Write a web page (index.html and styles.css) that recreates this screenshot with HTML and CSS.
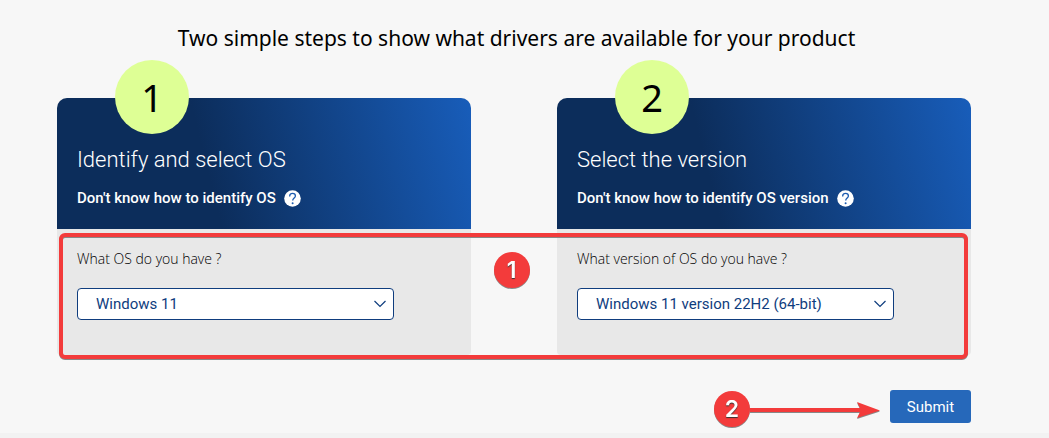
FILE: index.html
```
<!DOCTYPE html>
<html lang="en">
<head>
<meta charset="utf-8">
<meta name="viewport" content="width=device-width, initial-scale=1">
<title>Select your operating system</title>
<link rel="stylesheet" href="styles.css">
</head>
<body>
<main class="page">
  <h1 class="title">Two simple steps to show what drivers are available for your product</h1>
  <form class="form">
    <div class="cards">
      <section class="card">
        <header class="card-head">
          <span class="step">1</span>
          <h2 class="card-title">Identify and select OS</h2>
          <p class="hint">Don't know how to identify OS
            <button class="help" type="button" aria-label="Help">
              <svg class="help-icon" viewBox="0 0 17 17" aria-hidden="true"><circle cx="8.500" cy="8.500" r="8.300" fill="#fff"/><path d="M5.700 6.500V6C5.700 4.300 6.900 3.400 8.500 3.400S11.400 4.300 11.400 5.900C11.400 8 8.700 8 8.700 10.600" fill="none" stroke="#1d5cb0" stroke-width="1.300"/><circle cx="8.600" cy="13.200" r="1" fill="#1d5cb0"/></svg>
            </button>
          </p>
        </header>
        <div class="card-body">
          <label class="label" for="os">What OS do you have ?</label>
          <div class="field">
            <select class="select" id="os"><option>Windows 11</option></select>
            <svg class="chevron" viewBox="0 0 12 8" aria-hidden="true"><path d="M.500 1 6 6.500 11.500 1" fill="none" stroke="#0f3d7e" stroke-width="1.200"/></svg>
          </div>
        </div>
      </section>
      <section class="card">
        <header class="card-head">
          <span class="step">2</span>
          <h2 class="card-title">Select the version</h2>
          <p class="hint">Don't know how to identify OS version
            <button class="help" type="button" aria-label="Help">
              <svg class="help-icon" viewBox="0 0 17 17" aria-hidden="true"><circle cx="8.500" cy="8.500" r="8.300" fill="#fff"/><path d="M5.700 6.500V6C5.700 4.300 6.900 3.400 8.500 3.400S11.400 4.300 11.400 5.900C11.400 8 8.700 8 8.700 10.600" fill="none" stroke="#1d5cb0" stroke-width="1.300"/><circle cx="8.600" cy="13.200" r="1" fill="#1d5cb0"/></svg>
            </button>
          </p>
        </header>
        <div class="card-body">
          <label class="label" for="version">What version of OS do you have ?</label>
          <div class="field">
            <select class="select" id="version"><option>Windows 11 version 22H2 (64-bit)</option></select>
            <svg class="chevron" viewBox="0 0 12 8" aria-hidden="true"><path d="M.500 1 6 6.500 11.500 1" fill="none" stroke="#0f3d7e" stroke-width="1.200"/></svg>
          </div>
        </div>
      </section>
      <div class="outline"><span class="marker">1</span></div>
    </div>
    <div class="actions">
      <div class="pointer">
        <span class="marker">2</span>
        <svg class="arrow" viewBox="0 0 130 20" aria-hidden="true"><path d="M0 9H110L107 3 130 11.500 107 19 110 13H0Z" fill="#f33b3b"/></svg>
      </div>
      <button class="submit" type="submit">Submit</button>
    </div>
  </form>
</main>
<footer class="footer"></footer>
</body>
</html>
```
FILE: styles.css
```
* { box-sizing: border-box; }
body {
  margin: 0;
  min-height: 100vh;
  display: flex;
  flex-direction: column;
  background: #f7f7f7;
  color: #000;
  font-family: Roboto, "Noto Sans", sans-serif;
  font-size: 15px;
  line-height: 20px;
}
.page { padding: 22px 78px 6px 57px; }
.title {
  margin: 0;
  padding-left: 5px;
  text-align: center;
  font: 400 21px/32px "Noto Sans", sans-serif;
}
.form { margin-top: 44px; }
.cards {
  position: relative;
  display: grid;
  grid-template-columns: 1fr 1fr;
  gap: 86px;
}
.card {
  border-radius: 10px 10px 4px 4px;
  background: #e8e8e8;
}
.card-head {
  position: relative;
  padding: 46px 20px 21px;
  border-radius: 10px 10px 0 0;
  background: linear-gradient(76deg, #0c2d5b 37%, #185dba 100%);
  color: #fff;
}
.step {
  position: absolute;
  top: -38px;
  left: 58px;
  width: 74px;
  height: 74px;
  border-radius: 50%;
  background: #deff95;
  color: #000;
  text-align: center;
  font: 400 38px/74px "Noto Sans", sans-serif;
}
.card-title {
  margin: 0;
  font-size: 22px;
  font-weight: 300;
  line-height: 32px;
}
.hint {
  display: flex;
  align-items: center;
  gap: 8px;
  margin: 12px 0 0;
  font-weight: 500;
}
.help {
  display: flex;
  padding: 0;
  border: 0;
  background: none;
}
.help-icon { width: 17px; height: 17px; }
.card-body { padding: 20px 20px 35px; }
.label {
  display: block;
  font: 300 14px/20px "Open Sans", sans-serif;
}
.field {
  position: relative;
  max-width: 317px;
  margin-top: 19px;
}
.select {
  display: block;
  width: 100%;
  height: 32px;
  padding: 0 36px 0 18px;
  appearance: none;
  border: 1px solid #0f3d7e;
  border-radius: 4px;
  background: #fff;
  color: #0f3d7e;
  font: inherit;
}
.chevron {
  position: absolute;
  top: 12px;
  right: 8px;
  width: 12px;
  height: 8px;
  pointer-events: none;
}
.outline {
  position: absolute;
  inset: 135px 3px -4px 2px;
  border: 4px solid #f33b3b;
  border-radius: 6px;
  filter: drop-shadow(0 1px 0 #888);
  pointer-events: none;
}
.marker {
  width: 36px;
  height: 36px;
  border-radius: 50%;
  background: #f33b3b;
  color: #fff;
  text-align: center;
  text-shadow: 0 1px 1px #333;
  font: 600 23px/36px Inter, sans-serif;
}
.outline .marker {
  position: absolute;
  top: 15px;
  left: calc(50% - 20px);
}
.actions {
  display: flex;
  justify-content: flex-end;
  align-items: flex-start;
  gap: 10px;
  margin-top: 35px;
}
.pointer {
  display: flex;
  align-items: center;
  margin-top: 1px;
  filter: drop-shadow(0 1px 0 #888);
}
.arrow { width: 130px; height: 20px; }
.submit {
  width: 81px;
  height: 33px;
  padding: 0;
  border: 0;
  border-radius: 3px;
  background: #2668ba;
  color: #fff;
  font: inherit;
}
.footer { flex: 1; background: #f2f2f2; }
```
